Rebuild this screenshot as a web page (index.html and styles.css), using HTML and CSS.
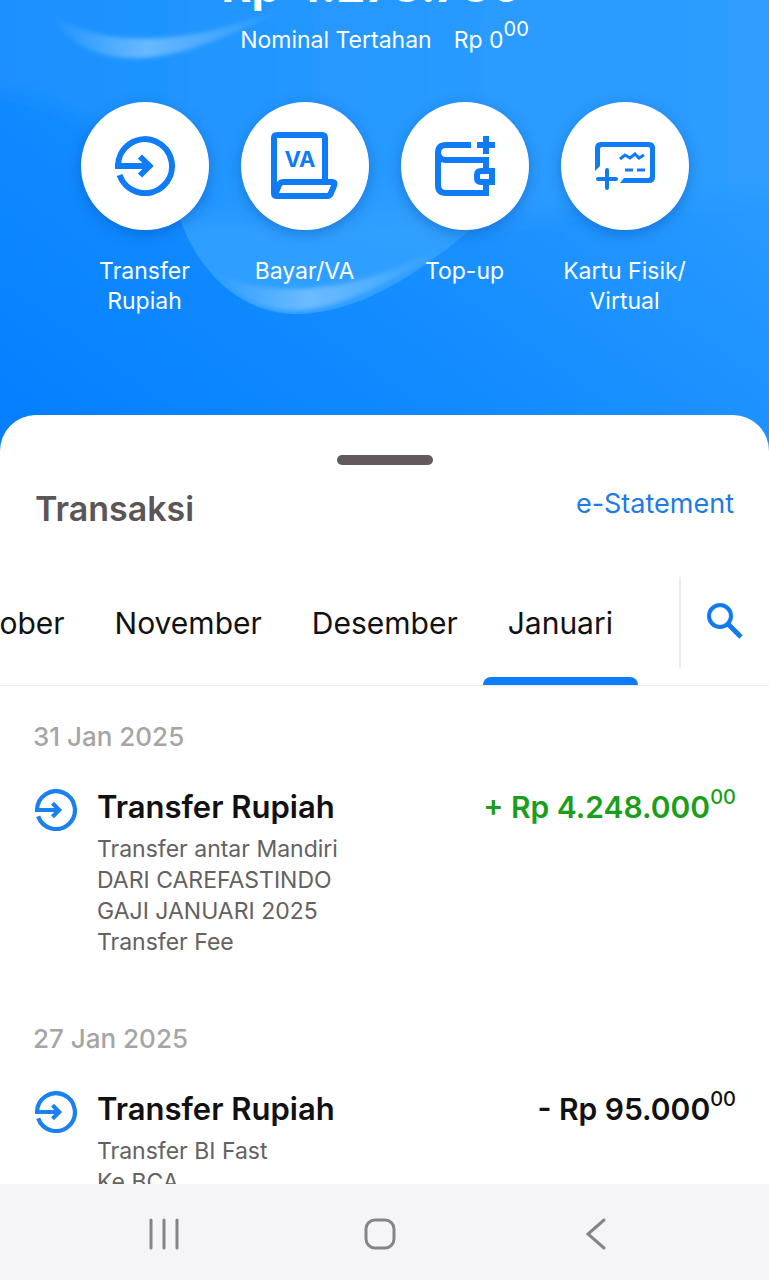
FILE: index.html
```html
<!DOCTYPE html>
<html lang="id">
<head>
    <meta charset="UTF-8">
    <meta name="viewport" content="width=device-width, initial-scale=1.0">
    <title>Rekening - Transaksi</title>
    <link rel="stylesheet" href="styles.css">
</head>
<body>

<svg class="icon-defs" aria-hidden="true">
    <symbol id="icon-transfer" viewBox="0 0 60 60">
        <path d="M3 30A27 27 0 1 1 4.500 39" fill="none" stroke="currentColor" stroke-width="6"/>
        <path d="M0 30H36M25 20.500L34.500 30L25 39.500" fill="none" stroke="currentColor" stroke-width="6"/>
    </symbol>
</svg>

<header class="hero">
    <svg class="hero-bg" viewBox="0 0 769 452" preserveAspectRatio="none" aria-hidden="true">
        <defs>
            <linearGradient id="base" x1="0" y1="1" x2="1" y2="0.2">
                <stop offset="0" stop-color="#047eff"/>
                <stop offset="0.4" stop-color="#118aff"/>
                <stop offset="1" stop-color="#2e9eff"/>
            </linearGradient>
            <linearGradient id="top" x1="0" y1="0" x2="1" y2="0">
                <stop offset="0" stop-color="#188fff"/>
                <stop offset="0.5" stop-color="#2799ff"/>
                <stop offset="1" stop-color="#2e9eff"/>
            </linearGradient>
            <linearGradient id="drop" x1="0" y1="0" x2="0" y2="1">
                <stop offset="0.3" stop-color="#32a1ff" stop-opacity="0"/>
                <stop offset="0.6" stop-color="#32a1ff" stop-opacity="0.9"/>
                <stop offset="1" stop-color="#32a1ff" stop-opacity="0.9"/>
            </linearGradient>
            <linearGradient id="shine" x1="0" y1="0" x2="1" y2="0">
                <stop offset="0" stop-color="#7cc3ff" stop-opacity="0"/>
                <stop offset="0.4" stop-color="#7cc3ff" stop-opacity="0.8"/>
                <stop offset="1" stop-color="#7cc3ff" stop-opacity="0"/>
            </linearGradient>
            <filter id="soft"><feGaussianBlur stdDeviation="2"/></filter>
            <filter id="softer"><feGaussianBlur stdDeviation="10"/></filter>
        </defs>
        <rect width="769" height="452" fill="url(#base)"/>
        <path d="M-50 -50H820V190C690 200 620 200 560 210C500 220 450 225 400 240C300 225 190 190 130 150C80 115 40 92 -50 82Z" fill="url(#top)" filter="url(#softer)"/>
        <path d="M165 130C165 230 215 312 295 314C360 314 420 272 470 230L560 110Z" fill="url(#drop)"/>
        <path d="M50 15C90 76 170 72 290 5C190 46 110 50 50 15Z" fill="url(#shine)" filter="url(#soft)"/>
        <path d="M215 272C260 325 325 330 450 243C365 292 270 302 215 272Z" fill="url(#shine)" filter="url(#soft)"/>
    </svg>

    <p class="balance">Rp 4.278.780</p>
    <p class="hold"><span>Nominal Tertahan</span><span>Rp 0<sup>00</sup></span></p>

    <nav class="actions">
        <button type="button" class="action">
            <span class="action-icon">
                <svg width="60" height="60"><use href="#icon-transfer"/></svg>
            </span>
            <span>Transfer<br>Rupiah</span>
        </button>
        <button type="button" class="action">
            <span class="action-icon">
                <svg width="68" height="68" viewBox="0 0 68 68" fill="none" stroke="currentColor" stroke-width="6" stroke-linejoin="round">
                    <path d="M54 49V6Q54 3 51 3H6Q3 3 3 6V61Q3 64 6 64H56Q59 64 60 61L63 54Q65 50 61 50H13Q9 50 8 53L4 63"/>
                    <text x="29" y="35" class="va">VA</text>
                </svg>
            </span>
            <span>Bayar/VA</span>
        </button>
        <button type="button" class="action">
            <span class="action-icon">
                <svg width="60" height="60" viewBox="0 0 60 60" fill="none" stroke="currentColor" stroke-width="6">
                    <path d="M36 9H11Q3 9 3 17V49Q3 57 11 57H51V46M51 35V24H11Q3 24 3 16"/>
                    <path d="M57 35H46Q42 35 42 39V42Q42 46 46 46H57Z"/>
                    <path d="M51 0V18M42 9H60"/>
                </svg>
            </span>
            <span>Top-up</span>
        </button>
        <button type="button" class="action">
            <span class="action-icon">
                <svg width="60" height="60" viewBox="0 0 60 60" fill="none" stroke="currentColor" stroke-width="5">
                    <path d="M0 35V12Q0 6 6 6H54Q60 6 60 12V41Q60 47 54 47H25L29 42H53Q55 42 55 40V13Q55 11 53 11H7Q5 11 5 13V30Z" fill="currentColor" stroke="none"/>
                    <path d="M12 34V52M3 43H21" stroke-width="4" stroke-linecap="round"/>
                    <path d="M25 23L30 19L35 22L40 18L44 22L49 19" stroke-width="3"/>
                    <path d="M30 34H38M42 34H50" stroke-width="3"/>
                </svg>
            </span>
            <span>Kartu Fisik/<br>Virtual</span>
        </button>
    </nav>
</header>

<main class="sheet">
    <div class="handle"></div>

    <div class="sheet-head">
        <h1>Transaksi</h1>
        <a href="#">e-Statement</a>
    </div>

    <div class="months">
        <div class="month-list">
            <button type="button">Oktober</button>
            <button type="button">November</button>
            <button type="button">Desember</button>
            <button type="button" class="active">Januari</button>
        </div>
        <button type="button" class="search" aria-label="Cari">
            <svg width="36" height="36" viewBox="0 0 36 36" fill="none" stroke="currentColor" stroke-width="4">
                <circle cx="13" cy="13" r="11"/>
                <path d="M21 21L34 34" stroke-width="5"/>
            </svg>
        </button>
    </div>

    <section class="day">
        <h2>31 Jan 2025</h2>
        <article class="item">
            <svg class="item-icon" width="42" height="42"><use href="#icon-transfer"/></svg>
            <div class="item-text">
                <h3>Transfer Rupiah</h3>
                <p>Transfer antar Mandiri<br>DARI CAREFASTINDO<br>GAJI JANUARI 2025<br>Transfer Fee</p>
            </div>
            <p class="amount in">+ Rp 4.248.000<sup>00</sup></p>
        </article>
    </section>

    <section class="day">
        <h2>27 Jan 2025</h2>
        <article class="item">
            <svg class="item-icon" width="42" height="42"><use href="#icon-transfer"/></svg>
            <div class="item-text">
                <h3>Transfer Rupiah</h3>
                <p>Transfer BI Fast<br>Ke BCA</p>
            </div>
            <p class="amount">- Rp 95.000<sup>00</sup></p>
        </article>
    </section>
</main>

<footer class="system-nav">
    <button type="button" aria-label="Aplikasi terbaru">
        <svg width="32" height="32" viewBox="0 0 32 32"><path d="M2 2V30M15 2V30M28 2V30"/></svg>
    </button>
    <button type="button" aria-label="Beranda">
        <svg width="32" height="32" viewBox="0 0 32 32"><rect x="2" y="2" width="28" height="28" rx="9"/></svg>
    </button>
    <button type="button" aria-label="Kembali">
        <svg width="32" height="32" viewBox="0 0 32 32"><path d="M24 2L8 16L24 30"/></svg>
    </button>
</footer>

</body>
</html>
```
FILE: styles.css
```css
* {
    box-sizing: border-box;
}
body {
    display: flex;
    flex-direction: column;
    height: 100vh;
    margin: 0;
    overflow: hidden;
    font-family: Inter, Roboto, sans-serif;
    background-color: white;
    color: #111;
}
h1, h2, h3, p {
    margin: 0;
}
button {
    padding: 0;
    border: 0;
    background: none;
    color: inherit;
    font: inherit;
    cursor: pointer;
}
sup {
    font-size: 20px;
    line-height: 0;
    vertical-align: 12px;
}
.icon-defs {
    display: none;
}

/* header */
.hero {
    position: relative;
    flex-shrink: 0;
    padding-bottom: 136px;
    color: white;
    text-align: center;
}
.hero-bg {
    position: absolute;
    top: 0;
    left: 0;
    width: 100%;
    height: 100%;
    z-index: -1;
}
.balance {
    margin-top: -45px;
    padding-right: 26px;
    font-size: 46px;
    line-height: 60px;
    font-weight: 700;
}
.hold {
    display: flex;
    justify-content: center;
    gap: 22px;
    margin-top: 9px;
    font-size: 23px;
    line-height: 32px;
}
.actions {
    display: grid;
    grid-template-columns: repeat(4, 160px);
    justify-content: center;
    margin-top: 46px;
}
.action {
    display: flex;
    flex-direction: column;
    align-items: center;
    gap: 26px;
    font-size: 23px;
    line-height: 30px;
}
.action-icon {
    display: flex;
    align-items: center;
    justify-content: center;
    width: 128px;
    height: 128px;
    border-radius: 50%;
    background-color: white;
    color: #0f7bf5;
    box-shadow: 0 4px 14px rgba(0, 60, 140, 0.35);
}
.va {
    fill: currentColor;
    stroke: none;
    font-size: 22px;
    font-weight: 700;
    text-anchor: middle;
}

/* transactions */
.sheet {
    position: relative;
    flex: 1;
    min-height: 0;
    margin-top: -37px;
    overflow: hidden;
    border-radius: 36px 36px 0 0;
    background-color: white;
}
.handle {
    width: 96px;
    height: 10px;
    margin: 40px auto 0;
    border-radius: 5px;
    background-color: #62595b;
}
.sheet-head {
    display: flex;
    justify-content: space-between;
    padding: 20px 35px 0;
}
.sheet-head h1 {
    padding-top: 4px;
    font-size: 34px;
    line-height: 40px;
    font-weight: 600;
    color: #5c5557;
}
.sheet-head a {
    font-size: 27px;
    line-height: 38px;
    color: #1c7be6;
    text-decoration: none;
}
.months {
    display: flex;
    height: 109px;
    margin-top: 48px;
    border-bottom: 1px solid #ececee;
}
.month-list {
    display: flex;
    flex: 1;
    justify-content: flex-end;
    min-width: 0;
    overflow: hidden;
    padding-right: 41px;
}
.month-list button {
    position: relative;
    flex-shrink: 0;
    padding: 0 25px 16px;
    font-size: 30px;
}
.month-list .active::after {
    content: "";
    position: absolute;
    left: 0;
    right: 0;
    bottom: 0;
    height: 8px;
    border-radius: 8px 8px 0 0;
    background-color: #0c7cf8;
}
.search {
    width: 90px;
    height: 91px;
    border-left: 2px solid #ececee;
    color: #1379ee;
}
.day {
    padding: 34px 33px 30px;
}
.day h2 {
    font-size: 26px;
    line-height: 34px;
    font-weight: 500;
    color: #a7a4a6;
}
.item {
    display: flex;
    margin-top: 33px;
}
.item-icon {
    flex-shrink: 0;
    margin: 2px 20px 0 2px;
    color: #1c80ee;
}
.item-text {
    flex: 1;
}
.item h3 {
    font-size: 31px;
    line-height: 40px;
    font-weight: 600;
}
.item-text p {
    margin-top: 7px;
    font-size: 23px;
    line-height: 31px;
    color: #636162;
}
.amount {
    font-size: 30px;
    line-height: 40px;
    font-weight: 600;
}
.amount.in {
    color: #1b9e1b;
}
.amount sup {
    font-weight: 500;
    vertical-align: 14px;
}

/* android buttons */
.system-nav {
    display: flex;
    flex-shrink: 0;
    justify-content: space-around;
    align-items: center;
    height: 96px;
    padding: 4px 65px 0 57px;
    background-color: #f5f5f8;
}
.system-nav svg {
    display: block;
    fill: none;
    stroke: #858587;
    stroke-width: 3;
    stroke-linecap: round;
}
```
